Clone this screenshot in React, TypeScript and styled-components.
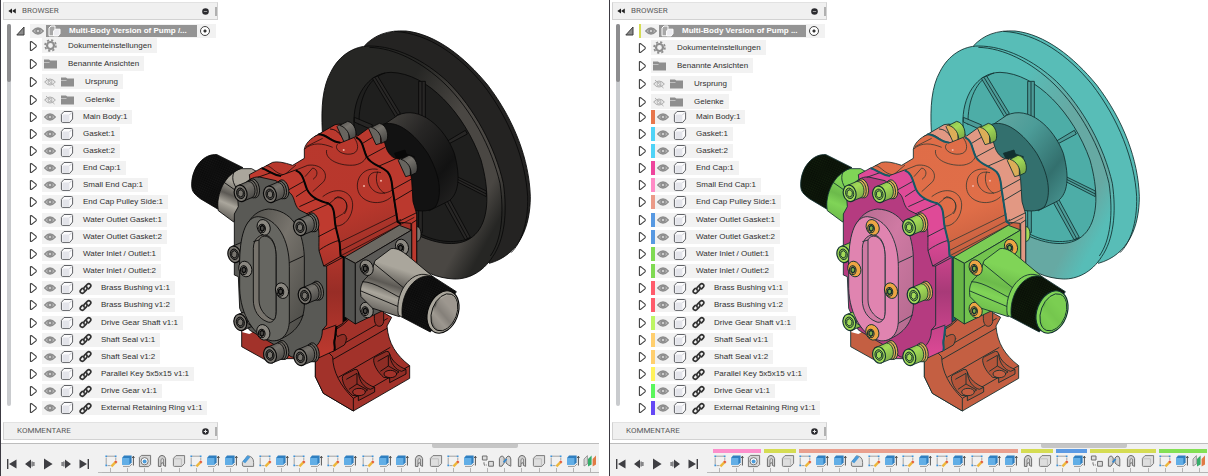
import React, { useId } from "react";
import styled, { createGlobalStyle } from "styled-components";

const Global = createGlobalStyle`
  * { box-sizing: border-box; }
  body { margin: 0; background: #ffffff; font-family: "Liberation Sans", Arial, sans-serif; }
  button { border: 0; padding: 0; background: none; color: inherit; font: inherit; cursor: pointer; }
  svg { display: block; flex: none; }
`;

/* ---------- layout ---------- */

const Page = styled.main`
  display: grid;
  grid-template-columns: 1fr 1fr;
  gap: 10px;
  min-height: 100vh;
`;

const View = styled.section`
  display: flex;
  flex-direction: column;
  min-width: 0;
  border-left: 1px solid #3c3a42;
  overflow: hidden;
`;

const Stage = styled.div`
  flex: 1;
  display: grid;
  grid-template-columns: minmax(0, 1fr);
  align-items: start;
`;

const Canvas = styled.div`
  grid-area: 1 / 1;
  padding: 10px 0 0 180px;
`;

const Panel = styled.aside`
  grid-area: 1 / 1;
  z-index: 1;
  width: 217px;
  padding: 2px 0 3px 2px;
`;

const PanelHeader = styled.header<{ $indent?: boolean }>`
  display: flex;
  align-items: center;
  gap: 6px;
  height: 18px;
  padding: 0 0 0 ${(p) => (p.$indent ? 13 : 4)}px;
  border: 1px solid #d2d2d2;
  border-top-color: #e2e2e2;
  background: #f0f0f0;
`;

const PanelTitle = styled.h2`
  flex: 1;
  margin: 0;
  color: #5c5c5c;
  font: 400 8px/12px Roboto, sans-serif;
`;

const Grip = styled.span`
  width: 2px;
  height: 9px;
  background: #b0b0b0;
`;

const TreeArea = styled.div`
  display: flex;
  gap: 5px;
  height: 402px;
  padding: 4px 0 0 4px;
`;

const ScrollRail = styled.div`
  width: 4px;
  height: 382px;
  border-radius: 2px;
  background: #c9cbce;
`;

const ScrollHandle = styled.div`
  height: 58px;
  border-radius: 2px;
  background: #8d8d8f;
`;

const Tree = styled.div`
  flex: 1;
  min-width: 0;
`;

const RootRow = styled.div`
  display: flex;
  align-items: center;
  gap: 5px;
  height: 14px;
`;

const RootBody = styled.div`
  flex: 1;
  display: flex;
  align-items: center;
  height: 14px;
  margin-right: 2px;
  background: #f2f2f2;
`;

const RootName = styled.div`
  flex: 1;
  display: flex;
  align-items: center;
  gap: 8px;
  height: 12px;
  min-width: 0;
  padding-left: 2px;
  background: #949494;
  color: #ffffff;
  font: 700 8px/12px "Liberation Sans", Arial, sans-serif;
  white-space: nowrap;
`;

const ActiveRadio = styled.input`
  appearance: none;
  width: 10px;
  height: 10px;
  margin: 0 6px 0 3px;
  border: 1px solid #444444;
  border-radius: 50%;
  background: radial-gradient(circle, #333333 0 1px, #ffffff 2px);
`;

const FolderList = styled.ul<{ $shift: number }>`
  display: flex;
  flex-direction: column;
  gap: 3px;
  height: 70px;
  margin: 0;
  padding: ${(p) => p.$shift}px 0 0;
  list-style: none;
`;

const PartList = styled.ul`
  display: grid;
  grid-auto-rows: 1fr;
  height: 309px;
  margin: 0;
  padding: 0;
  list-style: none;
`;

const Row = styled.li`
  display: flex;
  flex: none;
  align-items: center;
  gap: 4px;
  padding-left: 13px;
`;

const Tag = styled.span<{ $color: string; $thin?: boolean }>`
  align-self: stretch;
  width: ${(p) => (p.$thin ? 2 : 4)}px;
  margin-right: ${(p) => (p.$thin ? 2 : 0)}px;
  background: ${(p) => p.$color};
`;

const RowBody = styled.div<{ $tall?: boolean }>`
  display: flex;
  align-items: center;
  height: ${(p) => (p.$tall ? 15 : 14)}px;
  padding-right: 5px;
  background: #f2f2f2;
`;

const Cell = styled.span<{ $first?: boolean }>`
  display: flex;
  justify-content: center;
  width: ${(p) => (p.$first ? 17 : 18)}px;
`;

const EyeButton = styled.button`
  display: flex;
  justify-content: center;
  width: 16px;
`;

const RowText = styled.span<{ $wide?: boolean }>`
  padding-left: ${(p) => (p.$wide ? 9 : 7)}px;
  color: #303030;
  font-size: 8px;
  line-height: 12px;
  white-space: nowrap;
`;

/* ---------- timeline ---------- */

const Timeline = styled.footer`
  height: 33px;
  border-top: 1px solid #bdbdbd;
  background: #f1f1f1;
`;

const TimelineScroll = styled.div`
  height: 5px;
  padding-left: 72%;
`;

const TimelineThumb = styled.div`
  width: 86px;
  height: 4px;
  border-radius: 0 0 2px 2px;
  background: #c6c6c6;
`;

const Deck = styled.div`
  display: flex;
  height: 27px;
`;

const Playback = styled.div`
  display: flex;
  align-items: center;
  gap: 4px;
  padding: 3px 0 0 4px;
  width: 97px;
`;

const PlayButton = styled.button`
  display: flex;
  justify-content: center;
  width: 14px;
`;

const Lead = styled.div`
  width: 4px;
  height: 24px;
  border-bottom: 1px dashed #bbbbbb;
`;

const Track = styled.div`
  flex: 1;
  display: grid;
  grid-template-columns: repeat(29, minmax(0, 1fr));
  grid-template-rows: 4px 15px 4px;
  height: 24px;
  border-bottom: 1px solid #b4b4b4;
`;

const GroupBar = styled.span<{ $color: string; $from: number; $span: number }>`
  grid-row: 1;
  grid-column: ${(p) => p.$from} / span ${(p) => p.$span};
  margin: 0 1px 0 2px;
  background: ${(p) => p.$color};
`;

const Step = styled.button<{ $col: number }>`
  grid-row: 2;
  grid-column: ${(p) => p.$col};
  display: flex;
  align-items: center;
  justify-content: center;
`;

const Tick = styled.span<{ $col: number }>`
  grid-row: 3;
  grid-column: ${(p) => p.$col};
  justify-self: center;
  width: 1px;
  background: #b4b4b4;
`;

/* ---------- small icons ---------- */

const Arrow = () => (
  <svg width="9" height="12" viewBox="0 0 9 12" fill="#fff" stroke="#3d3d3d" strokeWidth="1.1" strokeLinejoin="round">
    <path d="M1.4 1.8 Q2.4 1.2 3.6 2.4 L7 5.2 Q7.6 6 7 6.8 L3.6 9.6 Q2.4 10.8 1.4 10.2 Z" />
  </svg>
);

const OpenArrow = () => (
  <svg width="9" height="10" viewBox="0 0 9 10">
    <path d="M8 1 V9 H.8 Z" fill="#8a8a8a" stroke="#3d3d3d" />
  </svg>
);

const Eye = ({ off }: { off?: boolean }) => (
  <svg width="12" height="10" viewBox="0 0 12 10" fill={off ? "none" : "#dadada"} stroke={off ? "#b0b0b0" : "#8e8e8e"}>
    <path d="M.8 5 Q6 -1 11.2 5 Q6 11 .8 5 Z" strokeWidth={off ? 1.1 : 1.5} />
    <circle cx="6" cy="5" r="2" strokeWidth={off ? 1 : 1.8} />
    {off && <path d="M2 1 L10.5 9" />}
  </svg>
);

const Cube = () => (
  <svg width="14" height="14" viewBox="0 0 14 14" fill="#fbfbfc" stroke="#606266" strokeWidth="1" strokeLinejoin="round">
    <path d="M4 1.5 H11.5 Q12.6 1.5 12.6 2.6 V9 L9.8 12.4 H2.6 Q1.4 12.4 1.4 11.2 V4.4 Z" />
    <path d="M2.6 4.6 H8.4 Q9.4 4.6 9.4 5.6 V11.8 H2.4 Z" fill="#e3e4ea" stroke="none" />
    <path d="M9.4 5 L12 2.4" stroke="#c6c8cf" />
  </svg>
);

const LinkIcon = () => (
  <svg width="13" height="13" viewBox="0 0 13 13" fill="none" stroke="#303030" strokeWidth="1.7" strokeLinecap="round">
    <path d="M5.2 8.1 Q4.2 6.6 5.6 5.2 L8.3 2.4 Q9.8 1.1 11.3 2.3 Q12.5 3.8 11.2 5.2 L9.6 6.8" />
    <path d="M7.6 4.9 Q8.8 6.4 7.4 7.8 L4.7 10.6 Q3.2 11.9 1.7 10.7 Q.5 9.2 1.8 7.8 L3.3 6.3" />
  </svg>
);

const Gear = () => (
  <svg width="13" height="13" viewBox="0 0 12 12" fill="none" stroke="#8e8e8e">
    <circle cx="6" cy="6" r="3.2" strokeWidth="2" />
    <circle cx="6" cy="6" r="5" strokeWidth="1.6" strokeDasharray="2 1.93" />
  </svg>
);

const Folder = () => (
  <svg width="13" height="10" viewBox="0 0 12 10" preserveAspectRatio="none" fill="#8e8e8e">
    <path d="M0 .4 H4.6 L5.8 1.6 H12 V3 H0 Z" />
    <path d="M0 3.4 H4.8 L6 2.4 H12 V9.6 H0 Z" />
  </svg>
);

const Assembly = () => (
  <svg width="13" height="12" viewBox="0 0 13 12" fill="#ececf0" stroke="#fff" strokeLinejoin="round">
    <path d="M1 3 L3 1 H7 V8 L5.6 10.8 H1 Z" fill="#a7a7a7" />
    <path d="M5.6 6 L7.4 4.2 H12 V8.6 L10.2 11 H5.6 Z" />
  </svg>
);

const Rewind = () => (
  <svg width="8" height="6" viewBox="0 0 8 6" fill="#222">
    <path d="M4 .5 V5.5 L.3 3 Z M7.8 .5 V5.5 L4.1 3 Z" />
  </svg>
);

const Round = ({ plus }: { plus?: boolean }) => (
  <svg width="7" height="7" viewBox="0 0 7 7">
    <circle cx="3.5" cy="3.5" r="3.3" fill="#2b2b2f" />
    <path d={plus ? "M1.8 3.5 H5.2 M3.5 1.8 V5.2" : "M1.8 3.5 H5.2"} stroke={plus ? "#e4e4e4" : "#9a9a9a"} strokeWidth="1" />
  </svg>
);

const PLAY: [string, string][] = [
  ["Zum Anfang", "M2 2 H3.4 V12 H2 Z M11.5 2.4 V11.6 L4 7 Z"],
  ["Schritt zurück", "M8 2.4 V11.6 L2 7 Z M8.6 4.5 H9.6 V9.5 H8.6 Z M10.4 5 H11.4 V9 H10.4 Z"],
  ["Wiedergabe", "M3 1.4 L11.6 7 L3 12.6 Z"],
  ["Schritt vor", "M6 2.4 V11.6 L12 7 Z M4.4 4.5 H5.4 V9.5 H4.4 Z M2.6 5 H3.6 V9 H2.6 Z"],
  ["Zum Ende", "M10.6 2 H12 V12 H10.6 Z M2.5 2.4 V11.6 L10 7 Z"],
];

type StepKind = "sketch" | "extrude" | "hole" | "thread" | "box" | "chamfer" | "joint" | "rigid" | "split";

const StepIcon = ({ kind }: { kind: StepKind }) => (
  <svg width="14" height="14" viewBox="0 0 14 14" fill="none" strokeLinejoin="round">
    {kind === "sketch" && (
      <>
        <path d="M3 2.2 H11 M2.2 3.5 V10.5 M3.5 11.6 H6.5 M11.8 3.5 V6" stroke="#999" strokeWidth=".9" />
        <path d="M1.4 1.4 h1.7 v1.7 h-1.7z M10.8 1.4 h1.7 v1.7 h-1.7z M1.4 10.6 h1.7 v1.7 h-1.7z" fill="#3a92da" />
        <path d="M7.4 12.4 L11.6 8.2" stroke="#eeb73c" strokeWidth="2.4" />
        <path d="M11.2 8.6 L12.6 7.2" stroke="#e25a3c" strokeWidth="2.4" />
      </>
    )}
    {kind === "extrude" && (
      <>
        <path d="M1 4 L3 1.6 H10.6 V8.6 L8.6 10.6 H1 Z" fill="#2f7fc0" />
        <path d="M1 4 H8.4 V11 H2 Q1 11 1 10 Z" fill="#62aee6" />
        <path d="M2 12.4 H8.6 L11 10" stroke="#999" />
        <path d="M12.4 11.5 V2.5 M11.2 4 L12.4 2.2 L13.4 4" stroke="#444" strokeWidth=".9" />
      </>
    )}
    {kind === "hole" && (
      <>
        <path d="M1.4 3.4 L3.4 1.4 H12.6 V10.6 L10.6 12.6 H1.4 Z" fill="#d6d6d6" stroke="#777" />
        <circle cx="6.6" cy="7.2" r="3.6" fill="#fff" stroke="#777" />
        <circle cx="6.6" cy="7.4" r="2" fill="#4b9bd9" />
      </>
    )}
    {kind === "thread" && (
      <>
        <path d="M3.4 12.4 V4.6 Q4.4 1.4 7 1.4 Q10 1.6 10.6 4.6 V12.4 L8.4 11.4 V8.4 L6 9.4 V12.4 Z" fill="#cfcfcf" stroke="#6e6e6e" />
        <path d="M6 9.4 V5.6 Q7 3.8 8.4 5 V8.4 Z" fill="#e8e8e8" stroke="#6e6e6e" strokeWidth=".8" />
      </>
    )}
    {kind === "box" && (
      <>
        <path d="M1.4 4.4 L4 1.6 H12.6 V9.4 L9.8 12.4 H2.4 Q1.4 12.4 1.4 11.4 Z" fill="#dedede" stroke="#7c7c7c" />
        <path d="M1.8 4.8 H9.4 V12" stroke="#c0c0c0" />
      </>
    )}
    {kind === "chamfer" && (
      <>
        <path d="M1.4 8.4 L6.6 1.8 Q12.6 2.4 12.6 8.4 V12.4 H3 Q1.4 12.4 1.4 11 Z" fill="#dedede" stroke="#7c7c7c" />
        <path d="M1.4 7.6 L6.4 1.6 L9.4 3 L4.2 9.2 Z" fill="#4b9bd9" />
      </>
    )}
    {kind === "joint" && (
      <>
        <path d="M1.4 2 H6 V6 H1.4 Z M7.6 7.4 H12.4 V12.2 H7.6 Z" fill="#dedede" stroke="#6e6e6e" />
        <path d="M3 8.4 V11 H5.6" stroke="#555" strokeDasharray="1.4 .8" />
      </>
    )}
    {kind === "rigid" && (
      <>
        <path d="M1.4 12.2 V4.6 Q2.4 1.6 4.6 2 L6.2 4 V9 L4 12.2 Z M8 9 V4 L10 2 Q12.4 1.8 12.8 5 V12.2 L10.4 11 Z" fill="#d3d3d3" stroke="#6e6e6e" />
        <path d="M5.6 8.4 L8.6 5" stroke="#2f86cf" strokeWidth="1.6" />
      </>
    )}
    {kind === "split" && (
      <>
        <path d="M1 12 V5 L4.4 1.6 V10 Z" fill="#d8d8d8" stroke="#888" strokeWidth=".8" />
        <path d="M5 12.6 V5 L8.6 1.6 V10.6 Z" fill="#36ad69" />
        <path d="M9.6 12.6 V5 L13 1.6 V10.6 Z" fill="#e07a44" />
      </>
    )}
  </svg>
);

/* ---------- pump drawing ---------- */

type Palette = {
  pulley: string; pulleyLit: string; pulleyDeep: string; hub: string; hubFace: string; groove: string; ink: string;
  body: string; bodyLit: string; bodyDark: string; foot: string; rear: string; side: string; sideDark: string; face: string;
  cover: string; coverSide: string; coverDeep: string;
  bolt: string; boltDark: string; washer: string; button: string;
  plate: string; plateTop: string; plateSide: string; cone: string; coneDark: string; bore: string; thread: string; threadDot: string;
  gasket: string;
};

const REAL: Palette = {
  pulley: "#262624", pulleyLit: "#4a4743", pulleyDeep: "#1f1f1e", hub: "#272625", hubFace: "#121212", groove: "#242322", ink: "#080808",
  body: "#b8382d", bodyLit: "#b8372c", bodyDark: "#8f2d25", foot: "#a2322a", rear: "#bb392e", side: "#bf3a2f", sideDark: "#982d26", face: "#595955",
  cover: "#666661", coverSide: "#77736c", coverDeep: "#474743",
  bolt: "#77746e", boltDark: "#4a4946", washer: "#68655f", button: "#8b8881",
  plate: "#5b5a57", plateTop: "#6c6962", plateSide: "#535350", cone: "#aaa69c", coneDark: "#5c5954", bore: "#97928a", thread: "#090909", threadDot: "#252525",
  gasket: "#050505",
};

const COLORED: Palette = {
  pulley: "#57bdb7", pulleyLit: "#66a9a3", pulleyDeep: "#4dada7", hub: "#4c9c98", hubFace: "#33706e", groove: "#58bdb7", ink: "#12302f",
  body: "#df6d48", bodyLit: "#e06e48", bodyDark: "#b4553a", foot: "#c45f42", rear: "#e29883", side: "#df4a97", sideDark: "#a83a78", face: "#b53b80",
  cover: "#e084b0", coverSide: "#cf7aa3", coverDeep: "#b2688d",
  bolt: "#a3db58", boltDark: "#7fae47", washer: "#dcae58", button: "#eda544",
  plate: "#73c34e", plateTop: "#7ccc55", plateSide: "#68b547", cone: "#80d457", coneDark: "#6cba4b", bore: "#79cc50", thread: "#080d06", threadDot: "#1c3512",
  gasket: "#155a67",
};

const SocketBolt = ({ x, y, c, id }: { x: number; y: number; c: Palette; id: string }) => (
  <g transform={`translate(${x} ${y})`}>
    <ellipse cx="39" cy="-15" rx="17" ry="29" transform="rotate(-12 39 -15)" fill={c.washer} />
    <ellipse cx="33" cy="-13" rx="16" ry="27" transform="rotate(-12 33 -13)" fill={c.washer} />
    <path d="M-6 -24 L22 -36 C42 -36 50 -2 36 12 L6 24 Z" fill={`url(#${id}bolt)`} />
    <ellipse rx="19" ry="25" transform="rotate(-14)" fill={c.bolt} strokeWidth="3.5" />
    <ellipse rx="12" ry="16" transform="rotate(-14)" fill={c.boltDark} />
    <path d="M-7 -7 L1 -11 L8 -4 L7 7 L-1 11 L-8 4 Z" fill={c.bolt} />
  </g>
);

const ButtonBolt = ({ x, y, c }: { x: number; y: number; c: Palette }) => (
  <g transform={`translate(${x} ${y})`}>
    <ellipse rx="19" ry="24" transform="rotate(-22)" fill={c.button} />
    <ellipse cx="-5" cy="3" rx="10" ry="13" transform="rotate(-5)" fill={c.button} strokeWidth="3" />
    <path d="M-10 -2 L-4 -6 L2 -1 L1 8 L-5 12 L-10 7 Z" fill={c.boltDark} strokeWidth="4" />
  </g>
);

const RearBolt = ({ x, y, c, id }: { x: number; y: number; c: Palette; id: string }) => (
  <g transform={`translate(${x} ${y})`}>
    <path d="M-34 -14 C-24 -28 -4 -20 2 4 L2 30 L-12 34 Z" fill={c.washer} />
    <path d="M-26 -18 L-2 -30 C20 -26 28 6 20 22 L4 30 C6 8 -6 -12 -26 -18 Z" fill={`url(#${id}bolt)`} />
  </g>
);

const Pocket = ({ x, y, c }: { x: number; y: number; c: Palette }) => (
  <g transform={`translate(${x} ${y})`}>
    <path d="M0 28 Q-2 20 6 16 L38 0 Q46 -2 48 8 C54 28 74 46 97 54 V68 L48 94 V80 L30 78 C14 64 2 46 0 28 Z" fill={c.bodyDark} />
    <path d="M12 30 L44 12 V44 L20 60 M44 44 L76 62 L50 78" fill="none" />
    <ellipse cx="50" cy="68" rx="19" ry="11" fill={c.foot} />
    <path d="M48 8 C50 36 66 56 84 60 L97 54" fill="none" />
  </g>
);

const Pump = ({ c, label }: { c: Palette; label: string }) => {
  const id = useId().replace(/[^a-zA-Z0-9]/g, "");
  const u = (name: string) => `url(#${id}${name})`;
  return (
    <svg width="360" height="410" viewBox="0 0 1080 1230" role="img" aria-label={label} stroke={c.ink} strokeWidth="2.6" strokeLinejoin="round">
      <defs>
        <linearGradient id={`${id}bolt`} x1="0" y1="0" x2=".5" y2="1">
          <stop offset="0" stopColor={c.boltDark} />
          <stop offset=".4" stopColor={c.bolt} />
          <stop offset="1" stopColor={c.boltDark} />
        </linearGradient>
        <linearGradient id={`${id}rim`} x1="0" y1="0" x2="1" y2=".7">
          <stop offset="0" stopColor={c.pulley} />
          <stop offset=".4" stopColor={c.pulley} />
          <stop offset=".64" stopColor={c.pulleyLit} />
          <stop offset=".9" stopColor={c.pulleyLit} />
          <stop offset="1" stopColor={c.pulley} />
        </linearGradient>
        <linearGradient id={`${id}hub`} x1="0" y1="0" x2="1" y2="1">
          <stop offset="0" stopColor={c.pulleyLit} />
          <stop offset=".35" stopColor={c.hub} />
          <stop offset=".7" stopColor={c.hubFace} />
          <stop offset="1" stopColor={c.hub} />
        </linearGradient>
        <linearGradient id={`${id}body`} x1=".3" y1="0" x2=".6" y2="1">
          <stop offset="0" stopColor={c.body} />
          <stop offset=".45" stopColor={c.bodyLit} />
          <stop offset=".8" stopColor={c.bodyDark} />
        </linearGradient>
        <linearGradient id={`${id}side`} x1="0" y1="0" x2="0" y2="1">
          <stop offset="0" stopColor={c.side} />
          <stop offset=".35" stopColor={c.side} />
          <stop offset=".65" stopColor={c.sideDark} />
          <stop offset="1" stopColor={c.side} />
        </linearGradient>
        <linearGradient id={`${id}cone`} x1=".65" y1="0" x2=".3" y2="1">
          <stop offset="0" stopColor={c.cone} />
          <stop offset=".3" stopColor={c.cone} />
          <stop offset=".55" stopColor={c.coneDark} />
          <stop offset=".72" stopColor={c.cone} />
          <stop offset="1" stopColor={c.coneDark} />
        </linearGradient>
        <linearGradient id={`${id}cover`} x1="0" y1="0" x2="1" y2="1">
          <stop offset="0" stopColor={c.coverDeep} />
          <stop offset=".45" stopColor={c.coverSide} />
          <stop offset="1" stopColor={c.coverDeep} />
        </linearGradient>
        <pattern id={`${id}thread`} width="7" height="7" patternUnits="userSpaceOnUse" patternTransform="rotate(28)">
          <rect width="7" height="7" fill={c.thread} stroke="none" />
          <path d="M2 0 V3 M5 4 V7" stroke={c.threadDot} strokeWidth="1.5" />
        </pattern>
      </defs>

      {/* pulley: back flange, groove, front flange */}
      <path d="M550 108 C580 75 620 60 675 63 C765 73 850 140 920 225 C1000 330 1045 450 1048 560 C1048 650 1015 735 925 760 L800 600 L600 200 Z" fill={c.groove} />
      <path d="M640 64 C745 70 835 138 905 222 C985 325 1034 450 1040 560 C1042 640 1020 700 990 728" fill="none" />
      <path d="M424 365 C420 290 425 230 450 185 C475 135 520 108 565 108 C645 108 730 150 800 215 C880 295 942 410 967 520 C980 610 970 690 935 740 C905 788 860 808 820 807 C770 805 720 785 690 750 L600 600 Z" fill={u("rim")} />
      <path d="M565 112 C640 114 722 155 792 222 C870 298 932 412 957 520 C970 610 962 690 928 738" fill="none" />
      <path d="M519 345 C515 260 560 188 630 187 C740 190 850 310 900 450 C925 540 925 620 890 665 C850 715 780 705 720 680 L560 560 Z" fill={c.pulleyDeep} />
      <path d="M534 345 C532 270 560 205 612 189 M715 670 C770 700 830 700 868 684" fill="none" />
      <g fill={c.hub}>
        <path d="M574 205 L590 198 L658 310 L643 320 Z M582 202 L650 314" />
        <path d="M713 214 H733 V322 L713 327 Z M723 216 V324" />
        <path d="M853 361 L859 372 L797 405 L788 400 Z" />
        <path d="M818 495 L916 543 V560 L826 514 Z M822 504 L916 552" />
        <path d="M788 574 L805 566 L868 682 L852 689 Z M797 570 L860 686" />
        <path d="M520 322 L575 345 L565 356 L520 336 Z" />
        <path d="M713 600 H724 V668 L713 672 Z" />
      </g>
      <path d="M610 343 L650 316 C715 285 790 350 820 430 C840 505 832 550 805 572 L745 602 L600 500 Z" fill={u("hub")} />
      <path d="M600 345 C645 325 700 370 740 430 C775 490 785 550 765 588 C750 605 720 605 695 600 L600 500 Z" fill={c.hubFace} />
      <path d="M640 430 L672 420 L676 432 L700 440 L690 470 L650 450 Z" fill={c.ink} />

      {/* rear pipe stub */}
      <path d="M180 476 L212 476 L240 492 L200 560 L158 636 L112 602 C100 545 130 490 180 476 Z" fill={u("cone")} />
      <path d="M122 512 L162 540 M162 480 C150 500 155 520 170 540" fill="none" />
      <path d="M32 525 C32 470 70 430 108 434 L186 473 C140 488 108 535 110 597 L58 566 C40 552 32 545 32 525 Z" fill={u("thread")} />

      {/* feet */}
      <path d="M182 960 V1010 L250 1048 L310 1010 L240 950 Z" fill={c.foot} />
      <path d="M182 966 L205 972 Q218 966 220 958 L200 955 Z" fill="#ffffff" stroke="none" />
      <path d="M403 1030 V1100 L427 1150 L517 1203 L686 1105 V1067 C645 1035 622 1000 618 948 L632 922 L560 880 L460 950 L460 1010 Z" fill={c.foot} />
      <path d="M403 1035 V1100 L427 1150 L517 1203 V1165 C480 1130 455 1085 455 1040 L430 1015 Z" fill={c.foot} />
      <path d="M517 1165 L686 1067 M456 1048 L618 955 M472 1102 L628 1012 M460 960 C470 990 490 1000 498 985 M455 1020 L620 925" fill="none" />
      <path d="M470 980 C500 960 500 990 490 1005 L455 1025" fill={c.bodyDark} />
      <path d="M580 925 C580 955 605 955 608 935 V900 L580 905 Z" fill={c.bodyDark} />
      <Pocket x={484} y={1078} c={c} />
      <Pocket x={578} y={1024} c={c} />

      {/* rear cap and its bolts */}
      <ellipse cx="709" cy="672" rx="11" ry="22" fill={c.bolt} />
      <path d="M400 380 L462 344 Q492 336 512 364 L530 378 L566 352 C595 350 606 375 612 402 C618 430 635 446 652 447 C678 450 688 480 692 510 L696 575 L707 612 V785 L650 740 L560 500 Z" fill={c.rear} />
      <path d="M447 357 C475 358 478 382 495 392 M545 400 L590 372 M560 440 L612 412 M590 470 L645 446 M632 540 L690 508 M640 572 L694 540 M650 636 L707 608" fill="none" />
      <RearBolt x={502} y={364} c={c} id={id} />
      <RearBolt x={597} y={370} c={c} id={id} />
      <RearBolt x={686} y={466} c={c} id={id} />

      {/* centre housing */}
      <path d="M370 445 V418 C374 395 400 376 420 372 C445 376 450 395 480 398 L525 380 C545 390 548 420 558 440 C570 465 600 468 618 485 C636 505 632 530 635 545 L650 636 L690 640 V760 L485 945 L462 960 V720 L320 520 L236 478 L275 457 Q295 452 335 466 Z" fill={u("body")} />
      <g fill="none" strokeWidth="2">
        <path d="M370 418 C395 395 425 400 455 412 M375 410 L425 385 M255 466 C275 470 280 490 310 495 L345 465" />
        <path d="M437 420 C430 450 480 470 522 465 C545 460 552 450 556 440" />
        <path d="M470 402 C455 420 490 440 518 430 C535 422 532 400 520 384" />
        <path d="M345 480 L380 466 C420 460 445 490 428 515 L395 545" />
        <path d="M372 500 L395 474 C412 478 412 498 396 508" />
        <path d="M425 560 C470 525 515 545 515 585 C515 620 490 650 465 648" />
        <path d="M440 585 L470 560 C500 565 505 595 485 612 L462 625 M460 565 C490 555 510 585 490 612" />
        <path d="M590 478 C545 470 520 510 532 545 C545 580 600 590 632 560" />
        <path d="M600 488 C570 480 555 500 565 525 C580 555 610 555 634 540 M590 485 C580 510 590 540 612 550" />
        <path d="M470 700 L650 612 M478 738 L700 622 M478 722 L660 628" />
      </g>
      <g fill="#f2b3a6" stroke="none">
        <circle cx="488" cy="420" r="3" />
        <circle cx="600" cy="512" r="3" />
        <circle cx="549" cy="528" r="3" />
      </g>
      <path d="M485 740 L497 745 V930 L468 945 Z" fill={c.gasket} />
      <g fill="none" stroke={c.gasket} strokeWidth="6">
        <path d="M412 373 C440 374 448 396 478 398 M525 382 C548 392 546 420 557 440 C568 464 602 468 620 486 C636 505 632 530 636 545 L650 636 L660 642" />
      </g>

      {/* front cap */}
      <path d="M205 494 L242 474 C262 480 272 492 298 497 L344 480 C368 488 368 515 378 538 C392 566 420 574 442 580 C465 592 458 625 464 650 L476 700 L478 736 L486 742 V940 L468 950 L462 985 L460 1022 L408 1046 L300 1046 L250 900 Z" fill={u("side")} />
      <path d="M160 612 L172 590 L170 560 C180 520 215 495 240 502 L285 512 L322 545 C345 560 335 580 355 600 L400 622 C420 650 412 690 414 722 L428 768 L437 768 V945 L424 960 C424 985 415 1000 402 1012 L370 1050 L330 1040 L290 1010 L205 960 L176 895 L172 800 L160 795 Z" fill={c.face} />
      <path d="M414 722 C425 710 470 690 474 692 M437 768 L486 742 M412 680 L466 652 M428 768 L480 738 M424 960 L466 945 M345 560 L378 538 M322 540 L372 512 M355 590 L408 566 M375 612 L442 582 M230 502 L270 488" fill="none" />
      <g fill="none" stroke={c.gasket} strokeWidth="6">
        <path d="M242 475 C262 480 272 494 300 498 M344 481 C368 490 368 515 378 538 C392 566 420 574 442 580 C465 592 458 625 464 650 L476 700 L479 738 L490 742 M466 948 L462 985 C455 1000 465 1010 460 1022" />
      </g>
      <SocketBolt x={160} y={733} c={c} id={id} />
      <SocketBolt x={178} y={937} c={c} id={id} />
      <SocketBolt x={267} y={1035} c={c} id={id} />

      {/* cover */}
      <path d="M176 760 C178 670 200 604 262 597 C330 600 366 655 370 740 V890 C366 945 335 975 285 992 L200 940 Z" fill={u("cover")} />
      <path d="M176 750 C178 665 198 620 232 620 C290 625 325 690 325 770 V930 C325 975 300 996 270 992 C220 980 178 915 176 835 Z" fill={c.cover} />
      <path d="M325 758 L368 738 M325 940 L368 915" fill="none" />
      <path d="M217 715 C217 685 240 668 260 677 C280 688 285 715 285 740 V905 C285 930 272 942 258 935 C232 925 217 900 217 870 Z" fill={c.coverSide} />
      <path d="M234 690 C240 675 260 675 270 688 C282 702 285 720 285 740 V905 C284 930 280 930 272 928 C250 918 234 895 234 870 Z" fill={c.cover} />
      <path d="M217 695 L234 690" />
      <SocketBolt x={179} y={550} c={c} id={id} />
      <SocketBolt x={267} y={553} c={c} id={id} />
      <SocketBolt x={357} y={652} c={c} id={id} />
      <SocketBolt x={371} y={857} c={c} id={id} />
      <SocketBolt x={358} y={1042} c={c} id={id} />
      <ButtonBolt x={248} y={652} c={c} />
      <ButtonBolt x={193} y={777} c={c} />
      <ButtonBolt x={303} y={842} c={c} />
      <ButtonBolt x={247} y={967} c={c} />

      {/* outlet flange, cone and threaded pipe */}
      <path d="M692 640 L707 630 V770 L692 760 Z" fill={c.rear} />
      <path d="M490 742 L655 646 L692 660 L523 760 Z" fill={c.plateTop} />
      <path d="M490 742 L523 760 V942 L490 920 Z" fill={c.plateSide} />
      <path d="M523 760 L692 660 V800 L640 885 L523 942 Z" fill={c.plate} />
      <ButtonBolt x={663} y={711} c={c} />
      <ButtonBolt x={557} y={900} c={c} />
      <path d="M540 860 C534 825 546 810 570 790 L582 752 L630 716 C650 712 670 728 690 745 L756 800 L655 920 L575 895 Z" fill={u("cone")} />
      <path d="M578 760 L666 832 M544 815 C580 815 630 850 656 862 M540 843 L652 890" fill="none" />
      <ButtonBolt x={557} y={773} c={c} />
      <path d="M752 800 C700 770 640 840 652 915 L664 922 L700 880 Z" fill={c.cone} />
      <path d="M756 800 C705 785 655 850 664 922 L748 966 L826 845 Z" fill={u("thread")} />
      <ellipse cx="786" cy="906" rx="45" ry="66" transform="rotate(21 786 906)" fill={c.cone} strokeWidth="3.5" />
      <ellipse cx="790" cy="907" rx="37" ry="58" transform="rotate(21 790 907)" fill={u("cone")} />
      <ellipse cx="792" cy="908" rx="33" ry="54" transform="rotate(21 792 908)" fill={c.bore} fillOpacity=".7" stroke="none" />
    </svg>
  );
};

/* ---------- data ---------- */

type Part = { name: string; color: string; linked?: boolean };

const PARTS: Part[] = [
  { name: "Main Body:1", color: "#e8764c" },
  { name: "Gasket:1", color: "#4fd3f7" },
  { name: "Gasket:2", color: "#4fd3f7" },
  { name: "End Cap:1", color: "#ee459d" },
  { name: "Small End Cap:1", color: "#ff8bc6" },
  { name: "End Cap Pulley Side:1", color: "#eb9a88" },
  { name: "Water Outlet Gasket:1", color: "#5799e2" },
  { name: "Water Outlet Gasket:2", color: "#5799e2" },
  { name: "Water Inlet / Outlet:1", color: "#7fda52" },
  { name: "Water Inlet / Outlet:2", color: "#7fda52" },
  { name: "Brass Bushing v1:1", color: "#ff5c6c", linked: true },
  { name: "Brass Bushing v1:2", color: "#ff5c6c", linked: true },
  { name: "Drive Gear Shaft v1:1", color: "#bdf564", linked: true },
  { name: "Shaft Seal v1:1", color: "#ffcf6e", linked: true },
  { name: "Shaft Seal v1:2", color: "#ffcf6e", linked: true },
  { name: "Parallel Key 5x5x15 v1:1", color: "#fff25c", linked: true },
  { name: "Drive Gear v1:1", color: "#5af75c", linked: true },
  { name: "External Retaining Ring v1:1", color: "#6548f5", linked: true },
];

const STEPS: StepKind[] = [
  "sketch", "extrude", "hole", "thread", "box", "sketch", "extrude", "extrude", "chamfer", "sketch",
  "extrude", "sketch", "extrude", "sketch", "extrude", "sketch", "extrude", "extrude", "thread", "box",
  "sketch", "extrude", "joint", "rigid", "thread", "box", "sketch", "extrude", "split",
];

const GROUPS: [string, number, number][] = [
  ["#fc8fcb", 1, 3],
  ["#d5dc52", 4, 2],
  ["#e99f8e", 6, 13],
  ["#d5dc52", 19, 2],
  ["#5c9ae4", 21, 2],
  ["#d5dc52", 23, 4],
  ["#83e054", 27, 3],
];

const FolderRow = ({ name, hidden, gear }: { name: string; hidden?: boolean; gear?: boolean }) => (
  <Row>
    <button aria-label={`${name} aufklappen`}><Arrow /></button>
    <RowBody $tall>
      {hidden && <EyeButton aria-label={`${name} einblenden`}><Eye off /></EyeButton>}
      <Cell $first={!hidden}>{gear ? <Gear /> : <Folder />}</Cell>
      <RowText $wide>{name}</RowText>
    </RowBody>
  </Row>
);

const PartRow = ({ part, colored }: { part: Part; colored: boolean }) => (
  <Row>
    <button aria-label={`${part.name} aufklappen`}><Arrow /></button>
    <RowBody>
      {colored && <Tag $color={part.color} />}
      <EyeButton aria-label={`${part.name} ausblenden`}><Eye /></EyeButton>
      <Cell><Cube /></Cell>
      {part.linked && <Cell><LinkIcon /></Cell>}
      <RowText>{part.name}</RowText>
    </RowBody>
  </Row>
);

const Workspace = ({ title, colored = false }: { title: string; colored?: boolean }) => (
  <View>
    <Stage>
      <Canvas>
        <Pump c={colored ? COLORED : REAL} label={title} />
      </Canvas>
      <Panel>
        <PanelHeader>
          <button aria-label="Browser einklappen"><Rewind /></button>
          <PanelTitle>BROWSER</PanelTitle>
          <button aria-label="Browser minimieren"><Round /></button>
          <Grip />
        </PanelHeader>
        <TreeArea>
          <ScrollRail><ScrollHandle /></ScrollRail>
          <Tree>
            <RootRow>
              <button aria-label="Baugruppe zuklappen"><OpenArrow /></button>
              <RootBody>
                {colored && <Tag $thin $color="#d5dc52" />}
                <EyeButton aria-label="Baugruppe ausblenden"><Eye /></EyeButton>
                <RootName><Assembly />{title}</RootName>
                <ActiveRadio type="radio" aria-label="Komponente aktivieren" defaultChecked />
              </RootBody>
            </RootRow>
            <FolderList $shift={colored ? 2 : 0}>
              <FolderRow name="Dokumenteinstellungen" gear />
              <FolderRow name="Benannte Ansichten" />
              <FolderRow name="Ursprung" hidden />
              <FolderRow name="Gelenke" hidden />
            </FolderList>
            <PartList>
              {PARTS.map((part) => <PartRow key={part.name} part={part} colored={colored} />)}
            </PartList>
          </Tree>
        </TreeArea>
        <PanelHeader $indent>
          <PanelTitle>KOMMENTARE</PanelTitle>
          <button aria-label="Kommentar hinzufügen"><Round plus /></button>
          <Grip />
        </PanelHeader>
      </Panel>
    </Stage>
    <Timeline>
      <TimelineScroll><TimelineThumb /></TimelineScroll>
      <Deck>
        <Playback>
          {PLAY.map(([name, d]) => (
            <PlayButton key={name} aria-label={name}>
              <svg width="14" height="14" viewBox="0 0 14 14" fill="#3f3f43"><path d={d} /></svg>
            </PlayButton>
          ))}
        </Playback>
        <Lead />
        <Track>
          {colored && GROUPS.map(([color, from, span]) => <GroupBar key={from} $color={color} $from={from} $span={span} />)}
          {STEPS.map((kind, i) => (
            <React.Fragment key={i}>
              <Step $col={i + 1} aria-label={`${kind} ${i + 1}`}><StepIcon kind={kind} /></Step>
              <Tick $col={i + 1} />
            </React.Fragment>
          ))}
        </Track>
      </Deck>
    </Timeline>
  </View>
);

export default function App() {
  return (
    <>
      <Global />
      <Page>
        <Workspace title="Multi-Body Version of Pump /..." />
        <Workspace title="Multi-Body Version of Pump ..." colored />
      </Page>
    </>
  );
}
